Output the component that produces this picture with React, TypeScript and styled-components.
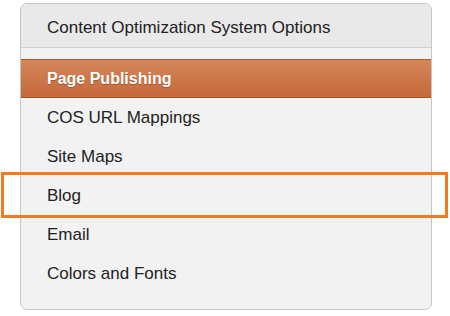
import styled, { createGlobalStyle } from "styled-components";

const GlobalStyle = createGlobalStyle`
  html, body {
    margin: 0;
    padding: 0;
    background: #ffffff;
  }
  body {
    font-family: "Liberation Sans", Arial, sans-serif;
  }
`;

const items = [
  { label: "Page Publishing", active: true },
  { label: "COS URL Mappings" },
  { label: "Site Maps" },
  { label: "Blog", highlighted: true },
  { label: "Email" },
  { label: "Colors and Fonts" },
];

const App = () => {
  return (
    <>
      <GlobalStyle />
      <Page>
        <Panel>
          <Header>Content Optimization System Options</Header>
          <Spacer />
          <Menu>
            {items.map(item => (
              <MenuItem key={item.label} active={item.active}>
                {item.label}
                {item.highlighted && <Callout />}
              </MenuItem>
            ))}
          </Menu>
        </Panel>
      </Page>
    </>
  );
};

export default App;

const Page = styled.div`
width: 450px;
height: 316px;
padding: 3px 0 0 20px;
box-sizing: border-box;
`

const Panel = styled.div`
width: 412px;
height: 307px;
box-sizing: border-box;
border: 1px solid #c6c6c6;
border-radius: 7px;
background: #f2f2f2;
display: flex;
flex-direction: column;
`

const Header = styled.div`
height: 44px;
flex-shrink: 0;
display: flex;
align-items: center;
padding: 5px 0 0 26px;
box-sizing: border-box;
background: #e9e9e9;
border-bottom: 1px solid #cfcfcf;
border-radius: 6px 6px 0 0;
font-size: 17px;
color: #222;
`

const Spacer = styled.div`
height: 11px;
flex-shrink: 0;
background: #f2f2f2;
`

const Menu = styled.ul`
list-style: none;
margin: 0;
padding: 0;
display: flex;
flex-direction: column;
`

const MenuItem = styled.li<IMenuItem>`
position: relative;
height: 39px;
display: flex;
align-items: center;
padding-left: 26px;
box-sizing: border-box;
font-size: 17px;
color: #222;
${({ active }) => active && `
  background: linear-gradient(#d5875a, #c6683a);
  border-top: 1px solid #b7582a;
  border-bottom: 1px solid #a9501f;
  color: #fff;
  font-size: 16px;
  font-weight: 700;
  text-shadow: 0 1px 1px rgba(0,0,0,0.25);
`}
`

const Callout = styled.span`
position: absolute;
left: -20px;
right: -17px;
top: -4px;
height: 46px;
box-sizing: border-box;
border: 3px solid #f47a20;
pointer-events: none;
`

interface IMenuItem {
  active?: boolean;
}
